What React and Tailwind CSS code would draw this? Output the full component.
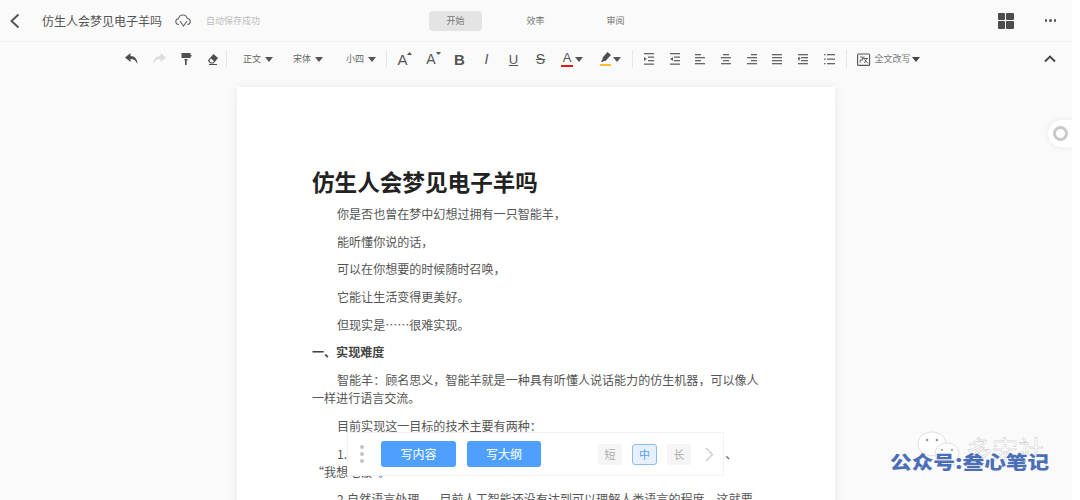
const S = ({ w = 16, h = 16, vb = "0 0 16 16", children, className = "" }) => (
  <svg width={w} height={h} viewBox={vb} className={className}>{children}</svg>
);
const Caret = ({ c = "#555" }) => (
  <svg width="8" height="5" viewBox="0 0 8 5"><path d="M0 0h8L4 5z" fill={c} /></svg>
);
const Cell = ({ children, className = "w-[27px]" }) => (
  <div className={`flex items-center justify-center shrink-0 h-full ${className}`}>{children}</div>
);
const Div = ({ className = "" }) => <div className={`w-px h-[18px] bg-[#e6e6e6] shrink-0 ${className}`} />;
const Drop = ({ t, className = "" }) => (
  <div className={`flex items-center gap-1 shrink-0 text-[9px] text-[#666] ${className}`}>
    <span className="w-[18px] whitespace-nowrap">{t}</span>
    <Caret />
  </div>
);
const Lines = ({ rows, children }) => (
  <S w={14} h={12} vb="0 0 14 12">
    {rows.map(([x, y, w], i) => (
      <rect key={i} x={x} y={y} width={w} height="1.3" fill="#666" />
    ))}
    {children}
  </S>
);
const Letter = ({ children, className = "" }) => <span className={`leading-none text-[#555] ${className}`}>{children}</span>;

export default function App() {
  return (
    <div className="w-[1080px] h-[500px] bg-white overflow-hidden font-['Noto_Sans_CJK_SC','Liberation_Sans',sans-serif]">
      <div className="relative w-[1072px] h-[500px] overflow-hidden bg-[#fafafa]">
        <header className="flex items-center h-[42px] border-b border-[#f1f1f1]">
          <div className="ml-[9px] w-[11px] shrink-0">
            <S w={11} h={16} vb="0 0 11 16"><path d="M9.5 1.5 2.5 8l7 6.5" fill="none" stroke="#555" strokeWidth="2" /></S>
          </div>
          <span className="ml-[22px] text-[12px] text-[#555] w-[120px] whitespace-nowrap">仿生人会梦见电子羊吗</span>
          <div className="ml-[13px] shrink-0">
            <S w={16} h={13} vb="0 0 16 13"><path d="M4 10.5C1.800 10.500 .8 9 .8 7.500c0-1.600 1.200-2.700 2.700-2.800C4 2.500 5.800 1 7.900 1c2.300 0 4 1.500 4.400 3.500 1.800.2 3 1.400 3 3 0 1.700-1.300 3-3 3M5 7l3.500 5L12 7" fill="none" stroke="#666" strokeWidth="1.1" /></S>
          </div>
          <span className="ml-[15px] text-[9px] text-[#bdbdbd] w-[54px] whitespace-nowrap">自动保存成功</span>
          <div className="ml-[169px] flex items-center gap-[27px] text-[9px] text-[#777]">
            <div className="w-[53px] h-[20px] rounded-sm bg-[#e4e4e4] flex items-center justify-center">开始</div>
            <div className="w-[53px] text-center">效率</div>
            <div className="w-[53px] text-center">审阅</div>
          </div>
          <div className="ml-auto grid grid-cols-2 gap-[1px] w-[16px] h-[16px] shrink-0">
            <div className="bg-[#4d4d4d] rounded-[1px]" /><div className="bg-[#4d4d4d] rounded-[1px]" />
            <div className="bg-[#4d4d4d] rounded-[1px]" /><div className="bg-[#4d4d4d] rounded-[1px]" />
          </div>
          <div className="ml-[31px] mr-[16px] flex gap-[2px] shrink-0">
            <div className="w-[2.500px] h-[2.500px] rounded-full bg-[#555]" />
            <div className="w-[2.500px] h-[2.500px] rounded-full bg-[#555]" />
            <div className="w-[2.500px] h-[2.500px] rounded-full bg-[#555]" />
          </div>
        </header>

        <div className="flex items-center h-[34px] pl-[118px]">
          <Cell><S w={14} h={12} vb="0 0 14 12"><path d="M5.500 0 0 4.500 5.500 9V6c3.500 0 5.500 1.500 7 5.500C12.500 6 10 3 5.500 3z" fill="#4f4f4f" /></S></Cell>
          <Cell><S w={14} h={12} vb="0 0 14 12"><path d="M8.500 0 14 4.500 8.500 9V6c-3.500 0-5.500 1.500-7 5.500C1.500 6 4 3 8.500 3z" fill="#dcdcdc" /></S></Cell>
          <Cell><S w={12} h={12} vb="0 0 12 12"><path d="M1.500 0h9v2h1v1.500h-1V5h-9zM4.500 6h3v1.500H6.600V12H5V7.500h-.5z" fill="#4f4f4f" /></S></Cell>
          <Cell><S w={12} h={12} vb="0 0 12 12"><path d="M6.500 1 11 5 6.500 10.500H3L.8 7.500zM3.500 9.500h2.500L7 8.300 4 5.500 2.300 7.500z" fill="#4f4f4f" /><path d="M2 11h8v1H2z" fill="#4f4f4f" /></S></Cell>
          <Div />
          <Drop t="正文" className="ml-[16px]" />
          <Drop t="宋体" className="ml-[20px]" />
          <Drop t="小四" className="ml-[23px]" />
          <Div className="ml-[10px]" />
          <div className="w-[4px] shrink-0" />
          <Cell><div className="flex items-start"><Letter className="text-[15px] font-['Liberation_Sans']">A</Letter><svg width="5" height="3" viewBox="0 0 5 3" className="-ml-[1px]"><path d="M0 3h5L2.500 0z" fill="#555" /></svg></div></Cell>
          <Cell className="w-[28px]"><div className="flex items-start ml-[3px]"><Letter className="text-[14px] font-['Liberation_Sans']">A</Letter><svg width="5" height="3" viewBox="0 0 5 3"><path d="M0 0h5L2.500 3z" fill="#555" /></svg></div></Cell>
          <Cell><Letter className="text-[15px] font-bold font-['Liberation_Sans']">B</Letter></Cell>
          <Cell><Letter className="text-[14px] italic font-['Liberation_Sans']">I</Letter></Cell>
          <Cell><Letter className="text-[13px] underline font-['Liberation_Sans']">U</Letter></Cell>
          <Cell><Letter className="text-[14px] line-through font-['Liberation_Sans']">S</Letter></Cell>
          <div className="ml-[7px] w-[12px] shrink-0 flex flex-col items-center">
            <Letter className="text-[13px] font-['Liberation_Sans']">A</Letter>
            <div className="w-[12px] h-[2px] mt-[1px] bg-[#e8141c]" />
          </div>
          <div className="ml-[2px] shrink-0"><Caret /></div>
          <div className="ml-[17px] w-[11px] shrink-0 flex flex-col items-center">
            <S w={10} h={11} vb="0 0 10 11"><path d="M6.500 0 10 3 4.500 9H2.500L2 9.700 0 10l1-2.200.7-.5V5.500z" fill="#4f4f4f" /></S>
            <div className="w-[11px] h-[2px] mt-[1px] bg-[#fbc02d]" />
          </div>
          <div className="ml-[2px] shrink-0"><Caret /></div>
          <Div className="ml-[11px]" />
          <div className="w-[3px] shrink-0" />
          <Cell className="w-[25.7px]"><Lines rows={[[2,0,10],[6,3.500,6],[6,7,6],[2,10.500,10]]}><path d="M2 4l3 2-3 2z" fill="#666" /></Lines></Cell>
          <Cell className="w-[25.7px]"><Lines rows={[[2,0,10],[6,3.500,6],[6,7,6],[2,10.500,10]]}><path d="M5 4 2 6l3 2z" fill="#666" /></Lines></Cell>
          <Cell className="w-[25.7px]"><Lines rows={[[2,1,6],[2,4,10],[2,7,6],[2,10,10]]} /></Cell>
          <Cell className="w-[25.7px]"><Lines rows={[[4,1,6],[2,4,10],[4,7,6],[2,10,10]]} /></Cell>
          <Cell className="w-[25.7px]"><Lines rows={[[6,1,6],[2,4,10],[6,7,6],[2,10,10]]} /></Cell>
          <Cell className="w-[25.7px]"><Lines rows={[[2,1,10],[2,4,10],[2,7,10],[2,10,10]]} /></Cell>
          <Cell className="w-[25.7px]"><Lines rows={[[2,1,10],[5,4,7],[5,7,7],[2,10,10]]}><path d="M3 3.500 4.300 5.500 3 8 1.700 5.500z" fill="#666" /></Lines></Cell>
          <Cell className="w-[25.7px]"><Lines rows={[[2,1,1.500],[5,1,8],[2,5.500,1.500],[5,5.500,8],[2,10,1.500],[5,10,8]]} /></Cell>
          <Div className="ml-[4px]" />
          <div className="ml-[10px] shrink-0">
            <S w={14} h={13} vb="0 0 14 13"><rect x=".6" y="1" width="12" height="11.400" rx="1" fill="none" stroke="#555" strokeWidth="1.100" /><path d="M3 4h2.500v3H3.200v2.500M7 3.500 6.500 6M7 5.500h4M10 5 7.500 10M7.500 6.500l3.500 4" fill="none" stroke="#555" strokeWidth=".9" /></S>
          </div>
          <span className="ml-[4px] w-[36px] shrink-0 text-[9px] text-[#777] whitespace-nowrap">全文改写</span>
          <div className="ml-[1px] shrink-0"><Caret c="#444" /></div>
          <div className="ml-auto mr-[16px] shrink-0">
            <S w={12} h={8} vb="0 0 12 8"><path d="M1 6.500 6 1.500l5 5" fill="none" stroke="#444" strokeWidth="1.800" /></S>
          </div>
        </div>

        <main className="w-[598px] mx-auto mt-[11px] bg-white shadow-[0_0_10px_rgba(0,0,0,0.07)] pt-[79px] pl-[75px] pr-[75px] h-[600px]">
          <h1 className="text-[22.6px] leading-[32px] font-bold text-[#222] mb-[7px] whitespace-nowrap">仿生人会梦见电子羊吗</h1>
          <div className="text-[12.05px] leading-[18px] text-[#555]">
            <p className="indent-[25px] mb-[9.700px]">你是否也曾在梦中幻想过拥有一只智能羊，</p>
            <p className="indent-[25px] mb-[9.700px]">能听懂你说的话，</p>
            <p className="indent-[25px] mb-[9.700px]">可以在你想要的时候随时召唤，</p>
            <p className="indent-[25px] mb-[9.700px]">它能让生活变得更美好。</p>
            <p className="indent-[25px] mb-[9.700px]">但现实是……很难实现。</p>
            <p className="mb-[9.700px] font-bold text-[#444]">一、实现难度</p>
            <p className="indent-[25px] mb-[9.700px]">智能羊：顾名思义，智能羊就是一种具有听懂人说话能力的仿生机器，可以像人一样进行语言交流。</p>
            <p className="indent-[25px] mb-[9.700px]">目前实现这一目标的技术主要有两种：</p>
            <p className="indent-[25px] mb-[9.700px] whitespace-nowrap">1. 语音识别——让机器能够听懂人类的语言，比如能听懂并回应“你好吗”、<br />“我想吃饭”。</p>
            <p className="indent-[25px] mb-[9.700px] whitespace-nowrap">2.自然语言处理——目前人工智能还没有达到可以理解人类语言的程度，这就要</p>
          </div>
        </main>

        <div className="absolute left-[347px] top-[432px] w-[377px] h-[44px] bg-white border border-[#f2f2f2] flex items-center">
          <div className="ml-[12px] flex flex-col gap-[3px] shrink-0">
            <div className="w-[4px] h-[4px] rounded-full bg-[#c4c4c4]" />
            <div className="w-[4px] h-[4px] rounded-full bg-[#c4c4c4]" />
            <div className="w-[4px] h-[4px] rounded-full bg-[#c4c4c4]" />
          </div>
          <button className="ml-[17px] w-[75px] h-[26px] rounded-[3px] bg-[#4f9fff] text-white text-[12px] flex items-center justify-center">写内容</button>
          <button className="ml-[11px] w-[74px] h-[26px] rounded-[3px] bg-[#4f9fff] text-white text-[12px] flex items-center justify-center">写大纲</button>
          <div className="ml-[57px] w-[24px] h-[21px] rounded-[2px] bg-[#f5f5f5] text-[#aaa] text-[11px] flex items-center justify-center">短</div>
          <div className="ml-[10px] w-[25px] h-[21px] rounded-[3px] bg-[#e6f1fd] border border-[#8dbcf5] text-[#4f9fff] text-[11px] flex items-center justify-center">中</div>
          <div className="ml-[10px] w-[24px] h-[21px] rounded-[2px] bg-[#f5f5f5] text-[#aaa] text-[11px] flex items-center justify-center">长</div>
          <div className="ml-[14px] shrink-0">
            <S w={9} h={15} vb="0 0 9 15"><path d="M1 1l6.500 6.500L1 14" fill="none" stroke="#c8c8c8" strokeWidth="1.200" /></S>
          </div>
        </div>

        <div className="absolute right-0 top-[120px] w-[24px] h-[27px] rounded-l-full bg-white shadow-[0_0_6px_rgba(0,0,0,0.08)] flex items-center pl-[5px]">
          <div className="w-[15px] h-[15px] rounded-full border-[3px] border-[#c9c9c9]" />
        </div>

        <svg width="46" height="38" viewBox="0 0 46 38" className="absolute left-[916px] top-[431px]">
          <g fill="#fff" stroke="#d2d2d2" strokeWidth=".7">
            <path d="M16 1C8 1 2 6.300 2 13c0 3.800 2 7 5 9.200L6 26l4.500-2.300c1.700.5 3.500.8 5.500.8 7.500 0 14-5 14-11.500S24 1 16 1z" />
            <path d="M31 12c-6.500 0-12 4.600-12 10.500S24.500 33 31 33c1.500 0 2.800-.2 4-.6l3.500 2-.9-3.300c3-2 5.400-5 5.400-8.600C43 16.600 37.500 12 31 12z" />
          </g>
          <g fill="#999">
            <circle cx="11" cy="9" r="1.300" /><circle cx="21" cy="9" r="1.300" />
            <circle cx="26" cy="19" r="1.100" /><circle cx="36" cy="19" r="1.100" />
          </g>
        </svg>
        <span className="absolute left-[966px] top-[434px] text-[26px] leading-[30px] text-white [-webkit-text-stroke:0.4px_#bbb] whitespace-nowrap">多宋社</span>
        <span className="absolute left-[890px] top-[449px] text-[18.500px] leading-[24px] font-black text-[#4a6fb8] whitespace-nowrap origin-left scale-x-[1.17]">公众号:叁心笔记</span>
      </div>
    </div>
  );
}
